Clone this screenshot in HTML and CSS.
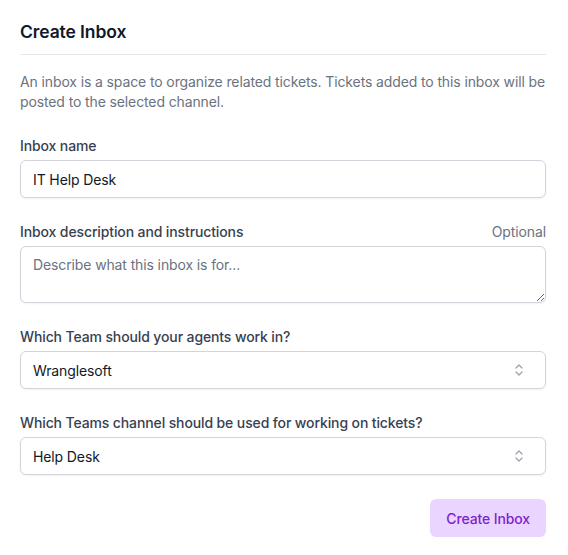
FILE: index.html
```html
<!DOCTYPE html>
<html lang="en">
<head>
<meta charset="utf-8">
<title>Create Inbox</title>
<link rel="stylesheet" href="styles.css">
</head>
<body>
<form class="panel">
  <div class="header">
    <h1 class="title">Create Inbox</h1>
  </div>
  <p class="intro">An inbox is a space to organize related tickets. Tickets added to this inbox will be posted to the selected channel.</p>

  <div class="field">
    <label class="label" for="name">Inbox name</label>
    <input class="control" id="name" type="text" value="IT Help Desk">
  </div>

  <div class="field">
    <div class="label-row">
      <label class="label" for="desc">Inbox description and instructions</label>
      <span class="optional">Optional</span>
    </div>
    <textarea class="control area" id="desc" placeholder="Describe what this inbox is for..."></textarea>
  </div>

  <div class="field">
    <label class="label">Which Team should your agents work in?</label>
    <div class="control select">
      <span>Wranglesoft</span>
      <svg class="chev" width="12" height="16" viewBox="0 0 12 16" fill="none" stroke="currentColor" stroke-width="1.3" stroke-linecap="round" stroke-linejoin="round"><path d="M3 6l3-3 3 3M3 10l3 3 3-3"/></svg>
    </div>
  </div>

  <div class="field">
    <label class="label">Which Teams channel should be used for working on tickets?</label>
    <div class="control select">
      <span>Help Desk</span>
      <svg class="chev" width="12" height="16" viewBox="0 0 12 16" fill="none" stroke="currentColor" stroke-width="1.3" stroke-linecap="round" stroke-linejoin="round"><path d="M3 6l3-3 3 3M3 10l3 3 3-3"/></svg>
    </div>
  </div>

  <div class="actions">
    <button type="button" class="btn">Create Inbox</button>
  </div>
</form>
</body>
</html>
```

FILE: styles.css
```css
* { box-sizing: border-box; }
html, body { margin: 0; background: #fff; }
body {
  font-family: Inter, "Noto Sans", "Liberation Sans", sans-serif;
  color: #374151;
  -webkit-font-smoothing: antialiased;
  letter-spacing: -0.12px;
}
.panel {
  padding: 20px 22px 0 20px;
  display: flex;
  flex-direction: column;
}
.header {
  border-bottom: 1px solid #e5e7eb;
  padding-bottom: 10px;
}
.title {
  margin: 0;
  font-size: 17.5px;
  line-height: 24px;
  font-weight: 600;
  color: #111827;
  letter-spacing: -0.1px;
}
.intro {
  margin: 17px 0 0;
  font-size: 14px;
  line-height: 20px;
  color: #6b7280;
}
.field {
  margin-top: 24px;
  display: flex;
  flex-direction: column;
  gap: 4px;
}
.label-row {
  display: flex;
  justify-content: space-between;
  align-items: baseline;
}
.label {
  font-size: 14px;
  line-height: 20px;
  font-weight: 500;
  color: #374151;
}
.optional {
  font-size: 14px;
  line-height: 20px;
  color: #6b7280;
}
.control {
  width: 100%;
  height: 38px;
  border: 1px solid #d1d5db;
  border-radius: 6px;
  box-shadow: 0 1px 2px rgba(0,0,0,0.05);
  padding: 0 12px;
  font-family: inherit;
  font-size: 14px;
  letter-spacing: inherit;
  color: #111827;
  background: #fff;
  outline: none;
}
.area {
  height: 57px;
  padding: 8px 12px;
  line-height: 20px;
  resize: vertical;
  display: block;
}
.area::placeholder { color: #6b7280; }
.select {
  display: flex;
  align-items: center;
  justify-content: space-between;
  padding-right: 20px;
}
.chev { color: #9ca3af; }
.actions {
  margin-top: 24px;
  display: flex;
  justify-content: flex-end;
}
.btn {
  height: 38px;
  padding: 0 16px;
  border: none;
  border-radius: 6px;
  background: #e9d5ff;
  color: #7e22ce;
  font-family: inherit;
  font-size: 14px;
  letter-spacing: inherit;
  font-weight: 500;
}
```
